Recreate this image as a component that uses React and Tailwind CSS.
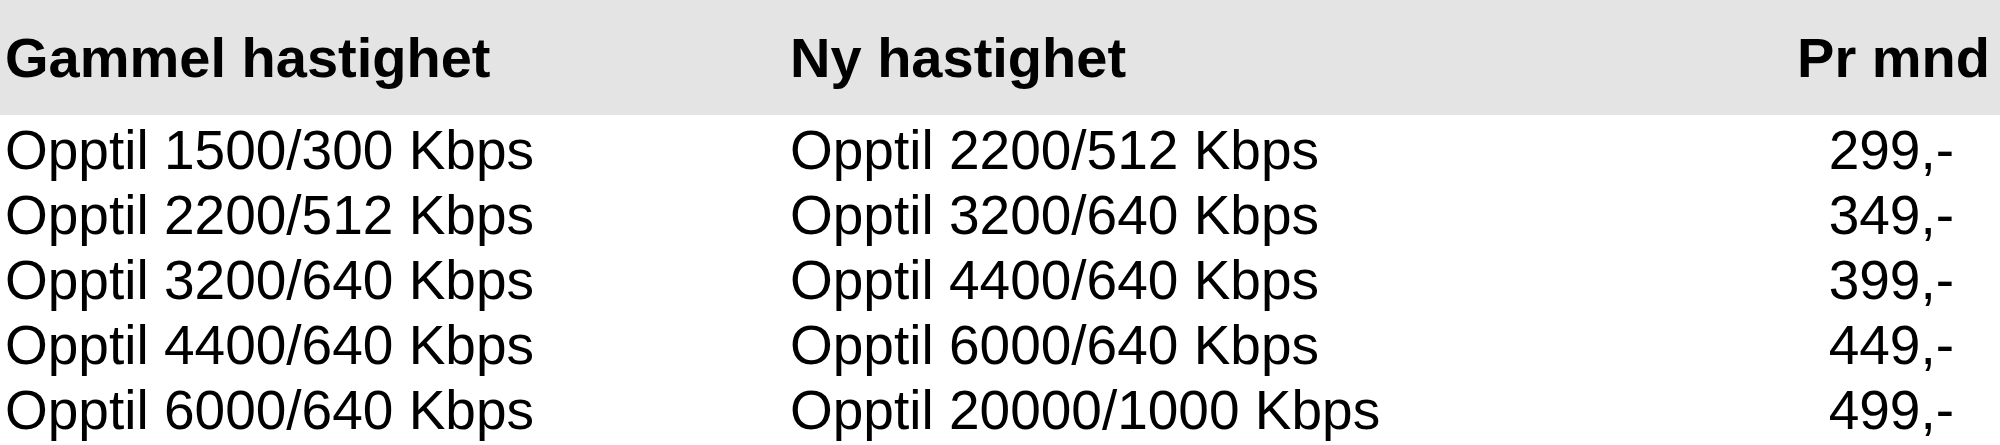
const rows = [
	["Opptil 1500/300 Kbps", "Opptil 2200/512 Kbps", "299,-"],
	["Opptil 2200/512 Kbps", "Opptil 3200/640 Kbps", "349,-"],
	["Opptil 3200/640 Kbps", "Opptil 4400/640 Kbps", "399,-"],
	["Opptil 4400/640 Kbps", "Opptil 6000/640 Kbps", "449,-"],
	["Opptil 6000/640 Kbps", "Opptil 20000/1000 Kbps", "499,-"],
];

export default function App() {
	return (
		<div
			className="w-[2000px] h-[445px] bg-white text-black overflow-hidden"
			style={{ fontFamily: '"Liberation Sans", Arial, sans-serif' }}
		>
			<div className="grid grid-cols-[790px_1fr_220px] h-[115px] items-center bg-[#e4e4e4] text-[56px] font-bold leading-[65px]">
				<div className="pl-[5px]">Gammel hastighet</div>
				<div>Ny hastighet</div>
				<div className="text-right pr-[10px]">Pr mnd</div>
			</div>
			<div className="pt-[3px] text-[55px] leading-[65px]">
				{rows.map(([oldSpeed, newSpeed, price]) => (
					<div key={price} className="grid grid-cols-[790px_1fr_220px]">
						<div className="pl-[5px]">{oldSpeed}</div>
						<div>{newSpeed}</div>
						<div className="text-right pr-[46px]">{price}</div>
					</div>
				))}
			</div>
		</div>
	);
}
